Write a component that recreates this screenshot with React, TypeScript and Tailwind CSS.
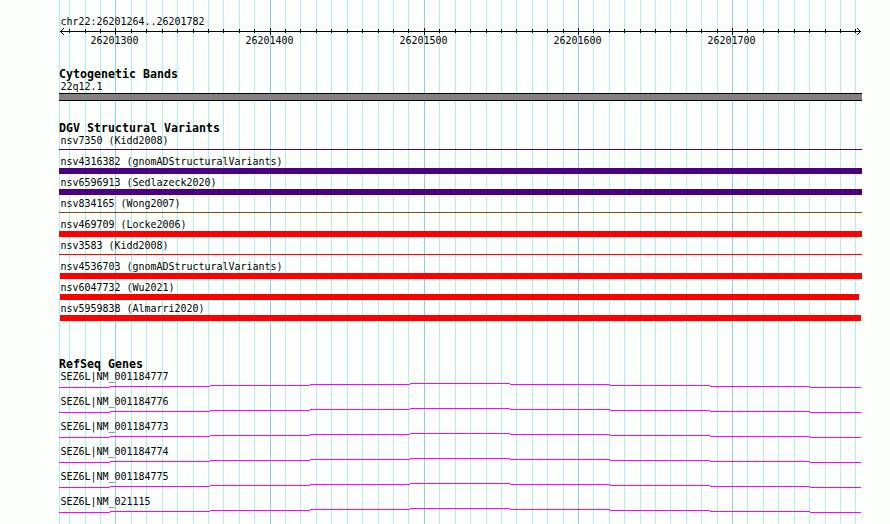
const MAJOR_TICKS = [
  { x: 115, label: '26201300' },
  { x: 270, label: '26201400' },
  { x: 424, label: '26201500' },
  { x: 578, label: '26201600' },
  { x: 732, label: '26201700' },
];

const MINOR_TICKS = [
  69, 85, 100, 131, 146, 162, 177, 193, 208, 223, 239, 254, 285, 300, 316, 331, 347, 362, 378,
  393, 408, 439, 455, 470, 486, 501, 516, 532, 547, 563, 593, 609, 624, 640, 655, 670, 686,
  701, 717, 747, 763, 778, 794, 809, 825, 840, 855,
];

interface Variant {
  name: string;
  bar: string;
}

const VARIANTS: Variant[] = [
  { name: 'nsv7350 (Kidd2008)', bar: 'mt-[2px] h-px w-[803px] bg-[#4b0082]' },
  { name: 'nsv4316382 (gnomADStructuralVariants)', bar: 'h-1.5 w-[803px] bg-[#4b0082]' },
  { name: 'nsv6596913 (Sedlazeck2020)', bar: 'h-1.5 w-[803px] bg-[#4b0082]' },
  { name: 'nsv834165 (Wong2007)', bar: 'mt-[2px] h-px w-[803px] bg-[#8b4513]' },
  { name: 'nsv469709 (Locke2006)', bar: 'h-1.5 w-[803px] bg-[#ff0000]' },
  { name: 'nsv3583 (Kidd2008)', bar: 'mt-[2px] h-px w-[803px] bg-[#ff0000]' },
  { name: 'nsv4536703 (gnomADStructuralVariants)', bar: 'ml-px h-1.5 w-[802px] bg-[#ff0000]' },
  { name: 'nsv6047732 (Wu2021)', bar: 'ml-px h-1.5 w-[799px] bg-[#ff0000]' },
  { name: 'nsv5959838 (Almarri2020)', bar: 'ml-px h-1.5 w-[801px] bg-[#ff0000]' },
];

const GENES = [
  'SEZ6L|NM_001184777',
  'SEZ6L|NM_001184776',
  'SEZ6L|NM_001184773',
  'SEZ6L|NM_001184774',
  'SEZ6L|NM_001184775',
  'SEZ6L|NM_021115',
];

function GridLines() {
  return (
    <svg className="absolute inset-0" width="890" height="524" shapeRendering="crispEdges">
      {[59, ...MINOR_TICKS].map((x) => (
        <rect key={x} x={x} y="0" width="1" height="524" fill="#afeeee" />
      ))}
      {MAJOR_TICKS.map(({ x }) => (
        <rect key={x} x={x} y="0" width="1" height="524" fill="#87ceeb" />
      ))}
    </svg>
  );
}

function Ruler() {
  return (
    <svg className="block" width="890" height="22" shapeRendering="crispEdges">
      <rect x="60" y="5" width="801" height="1" />
      {MINOR_TICKS.map((x) => (
        <rect key={x} x={x} y="3" width="1" height="4" />
      ))}
      {MAJOR_TICKS.map(({ x }) => (
        <rect key={x} x={x} y="2" width="1" height="7" />
      ))}
      {/* arrow heads */}
      <path d="M61 4h1v1h-1zM62 3h1v1h-1zM63 2h1v1h-1zM61 6h1v1h-1zM62 7h1v1h-1zM63 8h1v1h-1z" />
      <path d="M859 4h1v1h-1zM858 3h1v1h-1zM857 2h1v1h-1zM859 6h1v1h-1zM858 7h1v1h-1zM857 8h1v1h-1z" />
      {MAJOR_TICKS.map(({ x, label }) => (
        <text key={label} x={x - 24.5} y="18" textLength="48">
          {label}
        </text>
      ))}
    </svg>
  );
}

function Label({ children }: { children: string }) {
  return (
    <div className="h-3 origin-center scale-y-110 pl-[1.5px] leading-3 tracking-[-0.02px] whitespace-pre">
      {children}
    </div>
  );
}

function TrackTitle({ children }: { children: string }) {
  return (
    <h2 className="h-[13px] text-[11.6px] leading-3 font-bold tracking-[0.016px] whitespace-pre">
      {children}
    </h2>
  );
}

function Transcript() {
  return (
    <svg className="block" width="802" height="5" shapeRendering="crispEdges" fill="#ff00ff">
      <rect x="0" y="4" width="51" height="1" />
      <rect x="51" y="3" width="100" height="1" />
      <rect x="151" y="2" width="100" height="1" />
      <rect x="251" y="1" width="100" height="1" />
      <rect x="351" y="0" width="100" height="1" />
      <rect x="451" y="1" width="100" height="1" />
      <rect x="551" y="2" width="100" height="1" />
      <rect x="651" y="3" width="100" height="1" />
      <rect x="751" y="4" width="51" height="1" />
    </svg>
  );
}

export default function App() {
  return (
    <main className="relative h-[524px] w-[890px] overflow-hidden bg-[#fdfffc] font-['DejaVu_Sans_Mono','Liberation_Mono',monospace] text-[10px] text-black">
      <GridLines />
      <div className="relative flex flex-col pt-4">
        <div className="h-2.5 pl-[59px]">
          <Label>chr22:26201264..26201782</Label>
        </div>
        <Ruler />

        {/* Cytogenetic bands */}
        <section className="mt-5 pl-[59px]">
          <TrackTitle>Cytogenetic Bands</TrackTitle>
          <Label>22q12.1</Label>
          <div className="h-2 w-[803px] border-y border-black bg-[#848084]" />
        </section>

        {/* Structural variants */}
        <section className="mt-[21px] pl-[59px]">
          <TrackTitle>DGV Structural Variants</TrackTitle>
          {VARIANTS.map(({ name, bar }) => (
            <div key={name} className="flex h-[21px] flex-col">
              <Label>{name}</Label>
              <div className={bar} />
            </div>
          ))}
        </section>

        {/* Genes */}
        <section className="mt-[34px] pl-[59px]">
          <TrackTitle>RefSeq Genes</TrackTitle>
          {GENES.map((gene) => (
            <div key={gene} className="h-[25px]">
              <Label>{gene}</Label>
              <Transcript />
            </div>
          ))}
        </section>
      </div>
    </main>
  );
}
